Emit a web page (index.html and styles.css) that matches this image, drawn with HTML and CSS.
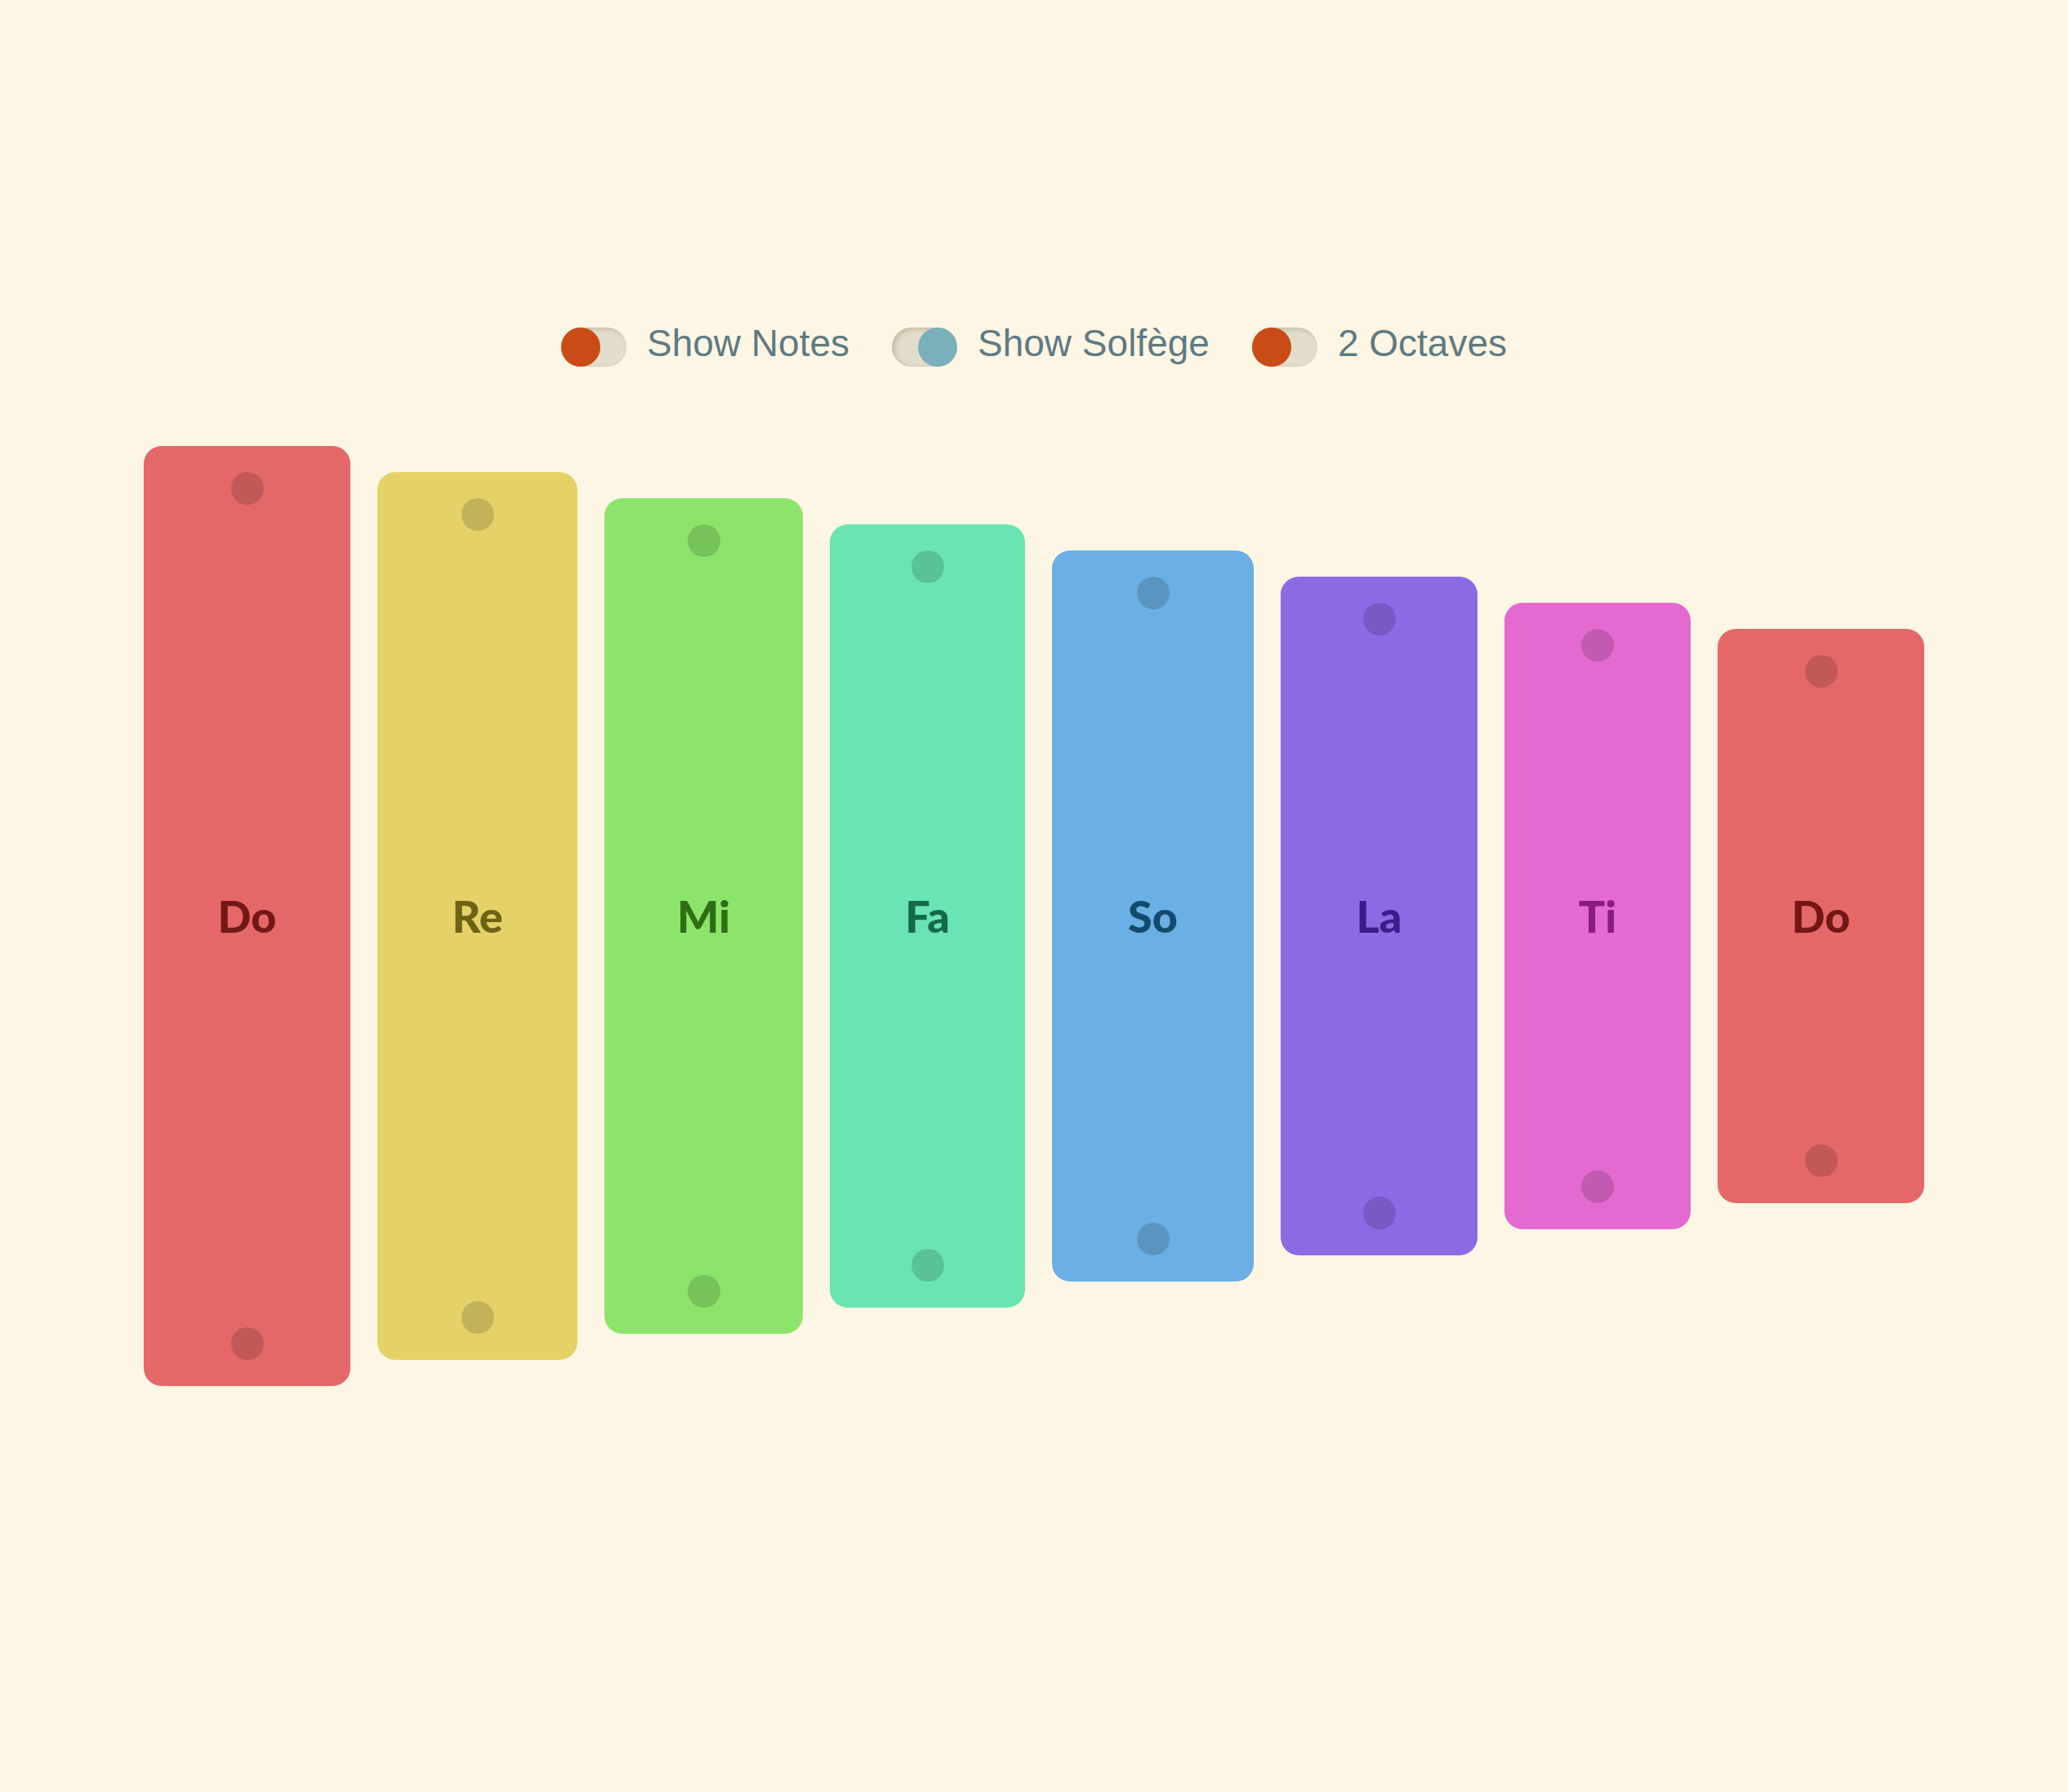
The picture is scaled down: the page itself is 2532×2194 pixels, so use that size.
FILE: index.html
```html
<!DOCTYPE html>
<html lang="en">
<head>
<meta charset="utf-8">
<title>Xylophone</title>
<link rel="stylesheet" href="styles.css">
</head>
<body>
<main class="app">
  <div class="controls">
    <label class="control">
      <span class="toggle toggle-orange"><span class="knob"></span></span>
      <span class="control-label">Show Notes</span>
    </label>
    <label class="control">
      <span class="toggle toggle-blue toggle-on"><span class="knob"></span></span>
      <span class="control-label">Show Solfège</span>
    </label>
    <label class="control">
      <span class="toggle toggle-orange"><span class="knob"></span></span>
      <span class="control-label">2 Octaves</span>
    </label>
  </div>
  <div class="xylophone">
    <div class="bar bar-do1"><span class="hole"></span><span class="note">Do</span><span class="hole"></span></div>
    <div class="bar bar-re"><span class="hole"></span><span class="note">Re</span><span class="hole"></span></div>
    <div class="bar bar-mi"><span class="hole"></span><span class="note">Mi</span><span class="hole"></span></div>
    <div class="bar bar-fa"><span class="hole"></span><span class="note">Fa</span><span class="hole"></span></div>
    <div class="bar bar-so"><span class="hole"></span><span class="note">So</span><span class="hole"></span></div>
    <div class="bar bar-la"><span class="hole"></span><span class="note">La</span><span class="hole"></span></div>
    <div class="bar bar-ti"><span class="hole"></span><span class="note">Ti</span><span class="hole"></span></div>
    <div class="bar bar-do2"><span class="hole"></span><span class="note">Do</span><span class="hole"></span></div>
  </div>
</main>
</body>
</html>
```
FILE: styles.css
```css
html, body {
  margin: 0;
  padding: 0;
  background: #fef6e4;
}
body {
  width: 2532px;
  height: 2194px;
  overflow: hidden;
  font-family: "Liberation Sans", Arial, sans-serif;
}
.app {
  display: flex;
  flex-direction: column;
  align-items: center;
  padding-top: 401px;
}
.controls {
  display: flex;
  align-items: center;
  gap: 52px;
  height: 48px;
}
.control {
  display: flex;
  align-items: center;
  gap: 25px;
}
.toggle {
  position: relative;
  display: flex;
  width: 80px;
  height: 48px;
  border-radius: 24px;
  background: #e3ddcb;
  box-shadow: inset 3px 2px 6px rgba(80, 60, 20, 0.22);
}
.toggle-on {
  justify-content: flex-end;
}
.knob {
  width: 48px;
  height: 48px;
  border-radius: 50%;
}
.toggle-orange .knob {
  background: #c94c16;
}
.toggle-blue .knob {
  background: #7ab0bc;
}
.control-label {
  font-size: 46px;
  line-height: 48px;
  color: #5f7a82;
  margin-bottom: 10px;
}
.xylophone {
  display: flex;
  align-items: center;
  gap: 33px;
  margin-top: 97px;
}
.bar {
  display: flex;
  flex-direction: column;
  align-items: center;
  justify-content: space-between;
  box-sizing: border-box;
  padding: 32px 0;
  border-radius: 22px;
}
.hole {
  width: 40px;
  height: 40px;
  border-radius: 50%;
  background: rgba(0, 0, 0, 0.15);
}
.note {
  font-family: Lato, "Noto Sans", sans-serif;
  font-weight: 900;
  font-size: 54px;
  line-height: 60px;
}
.bar-do1 { width: 253px; height: 1151px; background: #e46868; color: #731616; }
.bar-re  { width: 245px; height: 1087px; background: #e4d268; color: #6e6214; }
.bar-mi  { width: 243px; height: 1023px; background: #8ce46a; color: #2e6e14; }
.bar-fa  { width: 239px; height: 959px;  background: #6ae4b2; color: #146a48; }
.bar-so  { width: 247px; height: 895px;  background: #6ab0e4; color: #134a6e; }
.bar-la  { width: 241px; height: 831px;  background: #8c6ae4; color: #3a1d8a; }
.bar-ti  { width: 228px; height: 767px;  background: #e46ad0; color: #8a1c7c; }
.bar-do2 { width: 253px; height: 703px;  background: #e46868; color: #731616; }
```
